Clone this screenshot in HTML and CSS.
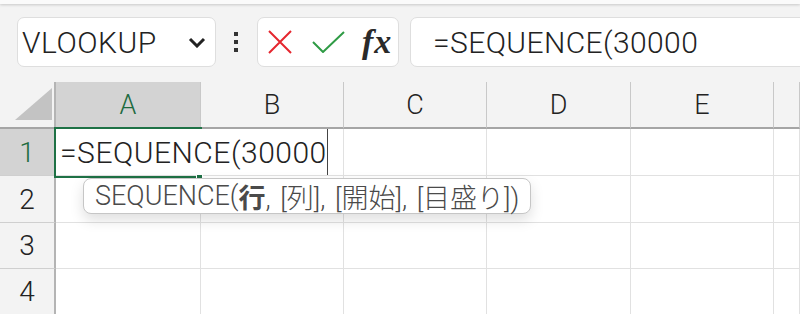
FILE: index.html
```html
<!DOCTYPE html>
<html lang="ja">
<head>
  <meta charset="UTF-8">
  <title>Excel - SEQUENCE</title>
  <link rel="stylesheet" href="styles.css">
</head>
<body>
  <div class="ribbon-edge"></div>

  <div class="formula-row">
    <div class="name-box">
      <span>VLOOKUP</span>
      <svg class="chevron" width="18" height="12" viewBox="0 0 18 12">
        <polyline points="2,3 9,10 16,3" fill="none" stroke="#222" stroke-width="3"/>
      </svg>
    </div>
    <div class="grip"><i></i><i></i><i></i></div>
    <div class="fx-buttons">
      <svg class="icon-cancel" width="24" height="24" viewBox="0 0 24 24">
        <path d="M1 1 L23 23 M23 1 L1 23" stroke="#e5262e" stroke-width="2" fill="none"/>
      </svg>
      <svg class="icon-enter" width="33" height="22" viewBox="0 0 33 22">
        <polyline points="1,11 11,21 32,1" fill="none" stroke="#2f9b45" stroke-width="2"/>
      </svg>
      <span class="fx">fx</span>
    </div>
    <div class="formula-input">=SEQUENCE(30000</div>
  </div>

  <div class="sheet">
    <div class="corner">
      <svg width="54" height="45" viewBox="0 0 54 45">
        <polygon points="15,38 52,6 52,38" fill="#c3c3c3"/>
      </svg>
    </div>
    <div class="col-head selected">A</div>
    <div class="col-head">B</div>
    <div class="col-head">C</div>
    <div class="col-head">D</div>
    <div class="col-head">E</div>
    <div class="col-head"></div>

    <div class="row-head selected">1</div>
    <div class="cell active">
      <div class="editor">=SEQUENCE(30000</div>
      <div class="fill-handle"></div>
    </div>
    <div class="cell"></div>
    <div class="cell"></div>
    <div class="cell"></div>
    <div class="cell"></div>
    <div class="cell"></div>

    <div class="row-head">2</div>
    <div class="cell"></div>
    <div class="cell"></div>
    <div class="cell"></div>
    <div class="cell"></div>
    <div class="cell"></div>
    <div class="cell"></div>

    <div class="row-head">3</div>
    <div class="cell"></div>
    <div class="cell"></div>
    <div class="cell"></div>
    <div class="cell"></div>
    <div class="cell"></div>
    <div class="cell"></div>

    <div class="row-head">4</div>
    <div class="cell"></div>
    <div class="cell"></div>
    <div class="cell"></div>
    <div class="cell"></div>
    <div class="cell"></div>
    <div class="cell"></div>
  </div>

  <div class="tooltip">SEQUENCE(<b>行</b>, [列], [開始], [目盛り])</div>
</body>
</html>
```

FILE: styles.css
```css
body {
    margin: 0;
    height: 314px;
    overflow: hidden;
    position: relative;
    background: #f3f3f3;
    color: #222;
    font-family: Roboto, "Noto Sans CJK JP", sans-serif;
    font-weight: 300;
}

/* ribbon bottom edge */
.ribbon-edge {
    position: relative;
    height: 4px;
    background: #fafafa;
    box-shadow: 0 1px 3px rgba(0, 0, 0, 0.18);
}

/******************* formula bar *******************/

.formula-row {
    display: flex;
    align-items: flex-start;
    height: 78px;
    padding: 13px 0 0 17px;
    box-sizing: border-box;
}

.name-box,
.fx-buttons,
.formula-input {
    height: 50px;
    box-sizing: border-box;
    background: #fff;
    border: 1px solid #dedede;
    border-radius: 7px;
    display: flex;
    align-items: center;
}

.name-box {
    width: 199px;
    padding: 0 9px 0 4px;
    justify-content: space-between;
    font-size: 30px;
    letter-spacing: 0.5px;
}

.grip {
    display: flex;
    flex-direction: column;
    gap: 4px;
    margin: 15px 19px 0 18px;
}

.grip i {
    display: block;
    width: 4px;
    height: 4px;
    background: #333;
}

.fx-buttons {
    width: 142px;
    padding-left: 10px;
}

.icon-enter {
    margin-left: 20px;
}

.fx {
    margin-left: 17px;
    font-family: "Liberation Serif", serif;
    font-style: italic;
    font-weight: bold;
    font-size: 34px;
    letter-spacing: 1px;
    color: #2a2a2a;
}

.formula-input {
    flex: 1;
    margin: 0 -20px 0 11px;
    padding-left: 22px;
    font-size: 30px;
    letter-spacing: 0.4px;
}

/******************* sheet *******************/

.sheet {
    display: grid;
    grid-template-columns: 56px 145px 143px 143px 144px 143px 1fr;
    grid-template-rows: 47px 47px 47px 46px 46px;
    background: #fff;
}

.corner,
.col-head,
.row-head {
    background: #f3f3f3;
    display: flex;
    align-items: center;
    justify-content: center;
}

.corner {
    border-right: 2px solid #b4b4b4;
    border-bottom: 2px solid #a5a5a5;
}

.col-head {
    border-right: 1px solid #c8c8c8;
    border-bottom: 2px solid #a5a5a5;
    font-size: 27px;
    padding-top: 1px;
}

.row-head {
    border-right: 2px solid #b4b4b4;
    border-bottom: 1px solid #cfcfcf;
    font-size: 28px;
}

.col-head.selected,
.row-head.selected {
    background: #d3d3d3;
    color: #1e6b40;
}

.cell {
    border-right: 1px solid #e1e1e1;
    border-bottom: 1px solid #e1e1e1;
}

/* A1 - edit mode */
.cell.active {
    position: relative;
}

.cell.active::before {
    content: "";
    position: absolute;
    left: -2px;
    top: -2px;
    right: -2px;
    bottom: -3px;
    border: 2px solid #1e7145;
    z-index: 1;
}

.editor {
    position: absolute;
    left: 0;
    top: 0;
    bottom: 0;
    width: 272px;
    box-sizing: border-box;
    padding-left: 4px;
    background: #fff;
    border-right: 1px solid #444;
    display: flex;
    align-items: center;
    font-size: 30px;
    letter-spacing: 0.5px;
    white-space: nowrap;
    z-index: 2;
}

.fill-handle {
    position: absolute;
    right: -3px;
    bottom: -6px;
    width: 5px;
    height: 5px;
    background: #1e7145;
    border: 1px solid #fff;
    z-index: 3;
}

/* function hint */
.tooltip {
    position: absolute;
    left: 83px;
    top: 178px;
    width: 448px;
    height: 36px;
    box-sizing: border-box;
    padding-left: 11px;
    background: #fff;
    border: 1px solid #c6c6c6;
    border-radius: 8px;
    box-shadow: 0 6px 14px rgba(0, 0, 0, 0.13);
    color: #4a4a4a;
    font-size: 27px;
    font-weight: 300;
    word-spacing: 3px;
    display: flex;
    align-items: center;
    white-space: nowrap;
    z-index: 5;
}

.tooltip b {
    font-weight: bold;
}
```
